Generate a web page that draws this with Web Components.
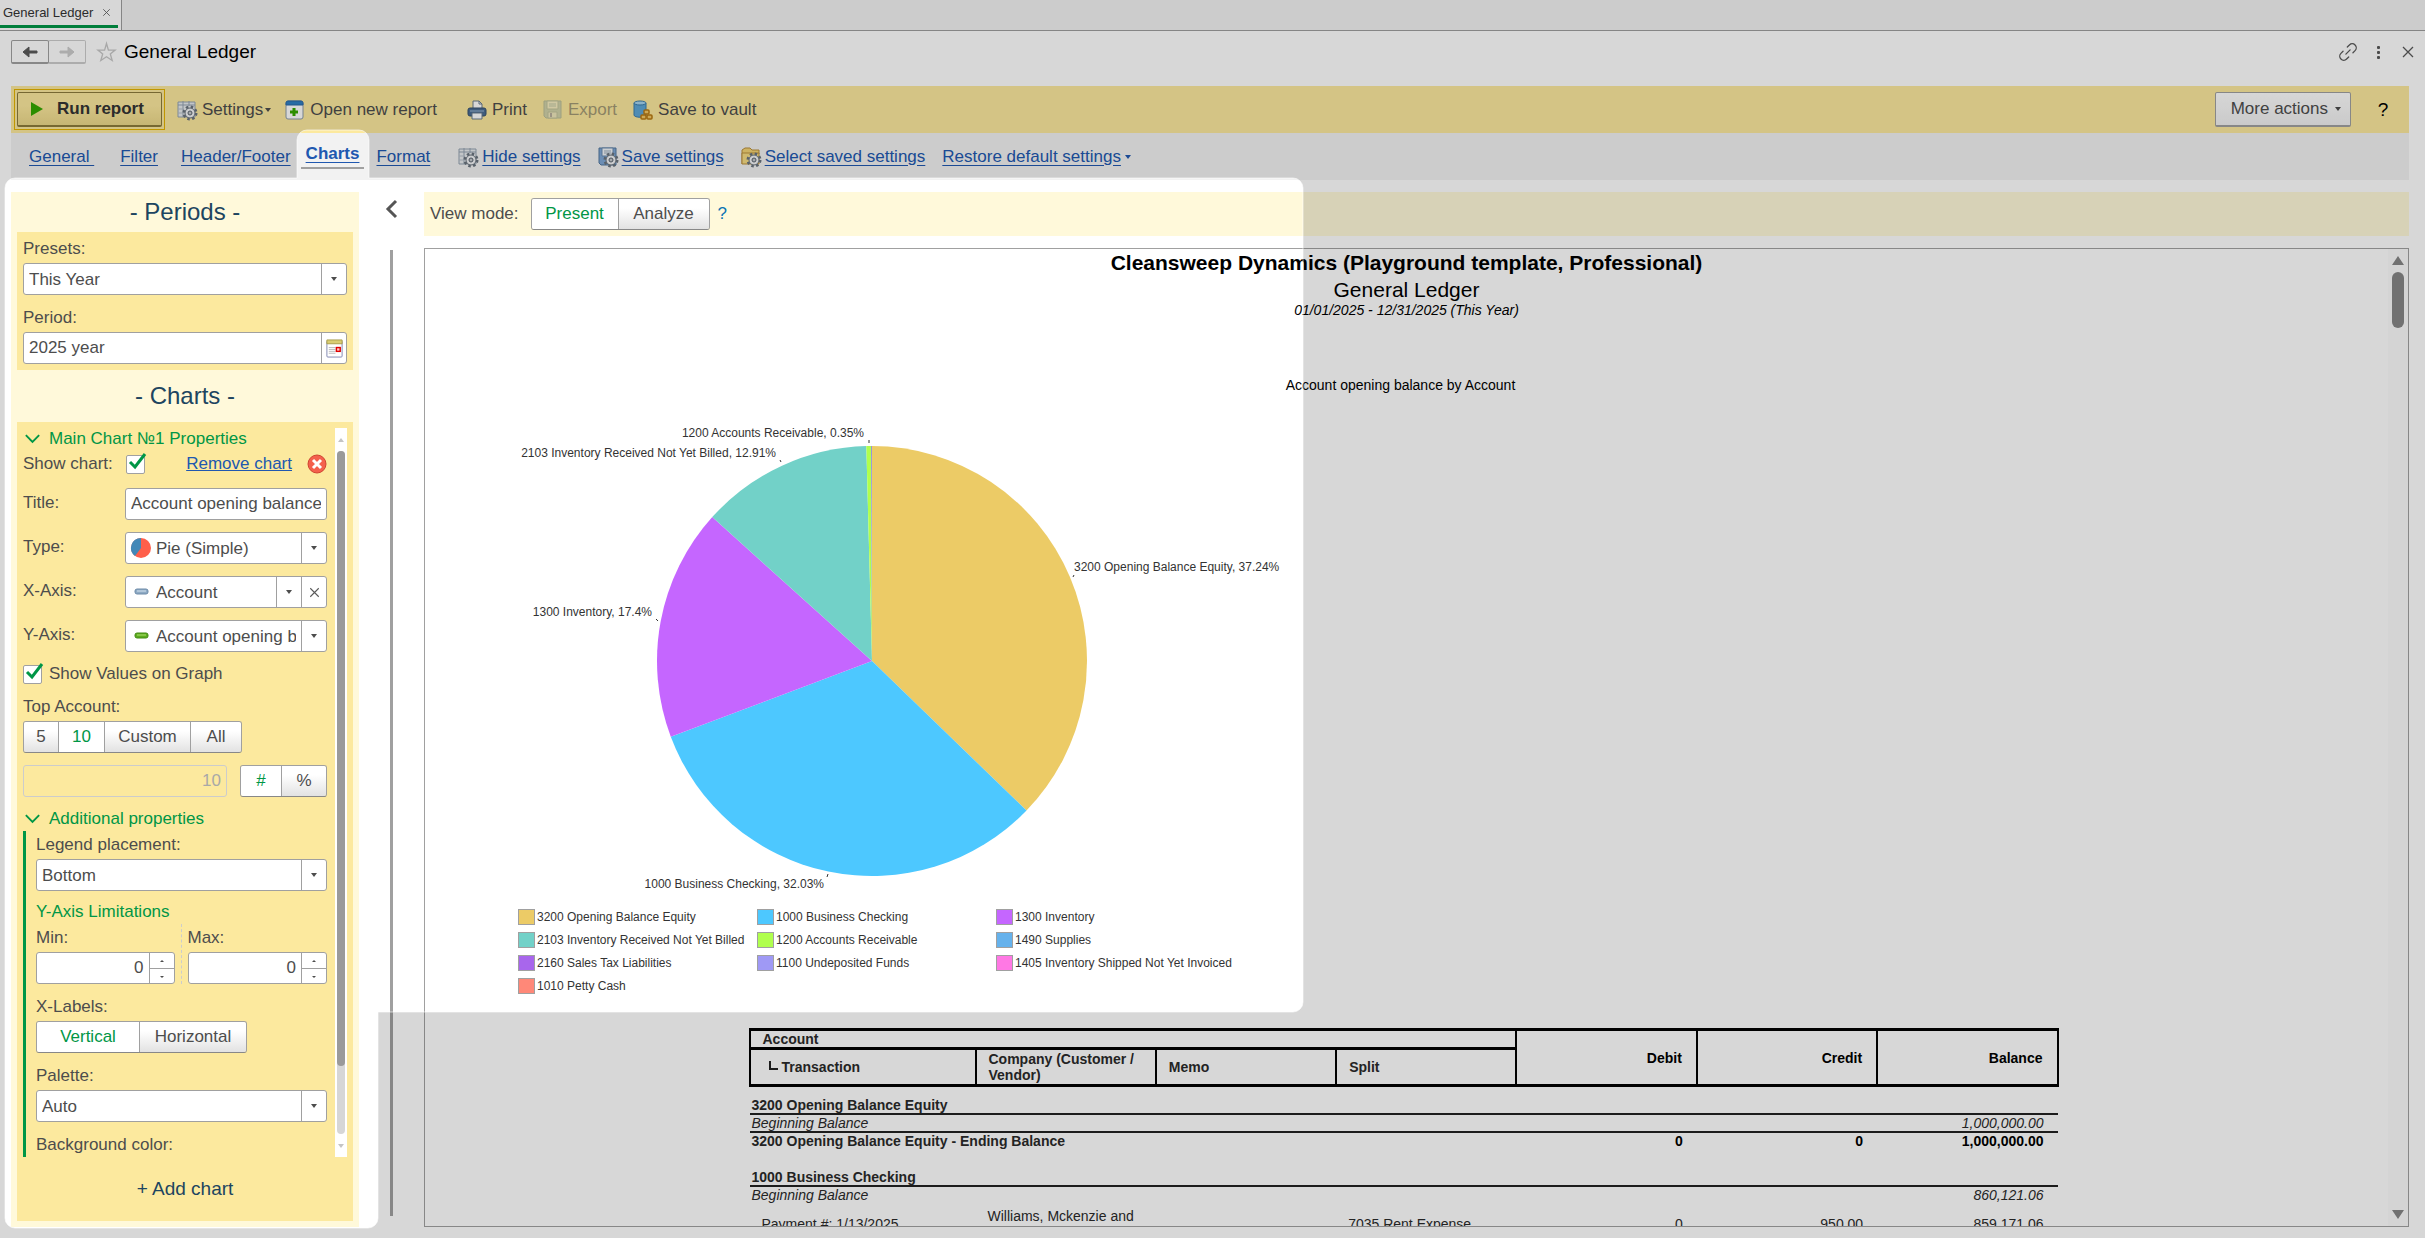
<!DOCTYPE html>
<html lang="en">
<head>
<meta charset="utf-8">
<title>General Ledger</title>
<style>
  html, body {
    margin: 0;
    height: 100%;
  }
  body {
    font-family: "Liberation Sans", Arial, sans-serif;
    font-size: 17px;
    color: #4d4d4d;
    background: #fff;
    overflow: hidden;
    --yellow: #fce99e;
    --pale: #fff9da;
    --line: #a0a0a0;
    --green: #009646;
    --link: #2058b0;
  }
</style>
</head>
<body>
<ledger-app></ledger-app>

<script>
const ICONS = {
  sheetgear: `<path d="M1 2h17v15H1z" fill="#e8ebee" stroke="#94a2b0"/><path d="M1 5h17M6 1v16M12 1v5" stroke="#94a2b0"/><path d="M1 9h5M1 13h5" stroke="#b4bec8"/>{gear}`,
  disc: `<path d="M1 1h17v17H3l-2-2z" fill="#7fa8d6" stroke="#55789f"/><path d="M4 1h11v8H4z" fill="#f2f6fa" stroke="#6c8cb0"/><path d="M6 4h7M6 6h7" stroke="#9ab"/>{gear}`,
  folder: `<path d="M1 17V3l3-2h5l2 2h7v4" fill="#f4d375" stroke="#b98f3c"/><path d="M1 6h17v11H1z" fill="#f6dc84" stroke="#b98f3c"/>{gear}`,
  newdoc: `<rect x="1" y="1" width="17" height="18" rx="2" fill="#fff" stroke="#8a9aaa"/><path d="M1 5V3q0-2 2-2h13q2 0 2 2v2z" fill="#2f7fc4" stroke="#2c6ba6"/><path d="M9 8v8M5 12h8" stroke="#35a800" stroke-width="3"/>`,
  print: `<path d="M6 9V1h6l3 3v5" fill="#fff" stroke="#6b7c8c"/><path d="M12 1v3h3" fill="none" stroke="#6b7c8c"/><rect x="1" y="8" width="18" height="8" rx="2" fill="#4a6d94" stroke="#35506e"/><path d="M3 11h14" stroke="#9db8d4"/><path d="M5 13h10v6H5z" fill="#fff" stroke="#6b7c8c"/>`,
  floppy: `<path d="M1 1h17v17H3l-2-2z" fill="#a8bcb4" stroke="#7c9494"/><path d="M4 1h11v8H4z" fill="#f4f4e4" stroke="#8aa09a"/><path d="M6 4h7M6 6h7" stroke="#8aa"/><path d="M5 12h9v6H5z" fill="#e4e8da" stroke="#8aa09a"/><path d="M7 13h2v4H7z" fill="#779"/>`,
  vault: `<path d="M1 3v12c0 3 12 3 12 0V3" fill="#5ea6d6" stroke="#3b7cab"/><ellipse cx="7" cy="3" rx="6" ry="2" fill="#a5d4ef" stroke="#3b7cab"/><g fill="#f4c964" stroke="#b87a12" stroke-width="1.500"><rect x="11" y="10" width="5" height="4" rx="1"/><rect x="8" y="15" width="5" height="4" rx="1"/><rect x="14" y="15" width="5" height="4" rx="1"/></g>`,
  link: `<g transform="rotate(-45 10 10)" fill="none" stroke="#5a5a5a" stroke-width="1.300" stroke-linecap="round"><path d="M7 6H4a4 4 0 0 0 0 8h3M13 6h3a4 4 0 0 1 0 8h-3M7 10h6"/></g>`,
  dots: `<g fill="#5a5a5a"><rect x="9" y="4" width="3" height="3" rx="1"/><rect x="9" y="9" width="3" height="3" rx="1"/><rect x="9" y="14" width="3" height="3" rx="1"/></g>`,
  cross: `<path d="M5 5l10 10M15 5L5 15" stroke="#5a5a5a" stroke-width="1.300"/>`,
  star: `<path d="M10 1l2 7h7l-5 4 2 7-6-4-6 4 2-7-5-4h7z" fill="none" stroke="#c8c8c8" stroke-width="1.400"/>`,
  left: `<path d="M3 10l6-5v4h8v2H9v4z" fill="#5a5a5a" stroke="#5a5a5a"/>`,
  right: `<path d="M17 10l-6-5v4H3v2h8v4z" fill="#ccc" stroke="#ccc"/>`,
  play: `<path d="M4 3l12 7-12 7z" fill="#35a800"/>`,
  fold: `<path d="M3 6l7 7 7-7" fill="none" stroke="#009646" stroke-width="2"/>`,
  collapse: `<path d="M14 2L6 10l8 8" fill="none" stroke="#555" stroke-width="3"/>`,
  remove: `<circle cx="10" cy="10" r="9" fill="#f4604c" stroke="#cf4330"/><path d="M6 6l8 8M14 6l-8 8" stroke="#fff" stroke-width="3"/>`,
  pie: `<circle cx="10" cy="10" r="10" fill="#ff5f4a"/><path d="M10 10V0A10 10 0 0 0 4 18z" fill="#4288b8"/>`,
  bluebar: `<rect x="4" y="7" width="13" height="5" rx="2" fill="#8eaac4" stroke="#6c8aa8"/><path d="M6 9h9" stroke="#d5e3ef"/>`,
  greenbar: `<rect x="4" y="7" width="13" height="5" rx="2" fill="#5cac1e" stroke="#438a12"/><path d="M6 9h9" stroke="#b0e070"/>`,
  calendar: `<rect x="2" y="2" width="16" height="17" rx="1" fill="#fff" stroke="#8086b0"/><path d="M2 1h16v4H2z" fill="#d9cd73" stroke="#a89c4a"/><path d="M4 9h7M4 11h7M4 13h7M4 15h7" stroke="#bbb"/><rect x="12" y="9" width="4" height="4" fill="#fcc" stroke="#e00000" stroke-width="1.500"/>`
};
const GEAR = `<circle cx="13" cy="13" r="6" fill="none" stroke="#6a747e" stroke-width="3" stroke-dasharray="2.400 2.310"/><circle cx="13" cy="13" r="5" fill="#f2f4f6" stroke="#6a747e"/><circle cx="13" cy="13" r="2" fill="#c4c8cc" stroke="#59636e"/>`;

// Base class: fills an open shadow root with the string from render()
class BaseElement extends HTMLElement {
  connectedCallback() {
    if (this.shadowRoot) {
      return;
    }
    this.attachShadow({ mode: 'open' });
    this.shadowRoot.innerHTML = this.render();
  }

  attr(name, fallback = '') {
    return this.hasAttribute(name) ? this.getAttribute(name) : fallback;
  }
}

class UiIcon extends BaseElement {
  render() {
    return `
      <style>
        :host { display: inline-flex; flex: none; width: 20px; height: 20px; }
        svg { width: 100%; height: 100%; overflow: visible; }
      </style>
      <svg viewBox="0 0 20 20" aria-hidden="true">${ICONS[this.attr('name')].replace('{gear}', GEAR)}</svg>`;
  }
}
customElements.define('ui-icon', UiIcon);

class UiCaret extends BaseElement {
  render() {
    return `
      <style>
        :host { display: inline-block; flex: none; border: 3px solid transparent; border-top: 4px solid currentColor; border-bottom: 0; }
        :host([up]) { border-bottom: 4px solid currentColor; border-top: 0; }
      </style>`;
  }
}
customElements.define('ui-caret', UiCaret);

class ToolButton extends BaseElement {
  render() {
    return `
      <style>
        :host { display: flex; }
        button {
          display: flex;
          align-items: center;
          gap: 5px;
          padding: 0;
          border: 0;
          background: none;
          font: inherit;
          color: inherit;
          white-space: nowrap;
        }
        button:disabled { opacity: .5; }
        ui-caret { margin-left: -3px; }
      </style>
      <button ${this.hasAttribute('off') ? 'disabled' : ''}>
        <ui-icon name="${this.attr('icon')}"></ui-icon><slot></slot>
        ${this.hasAttribute('menu') ? '<ui-caret></ui-caret>' : ''}
      </button>`;
  }
}
customElements.define('tool-button', ToolButton);

class NavLink extends BaseElement {
  render() {
    const icon = this.attr('icon');
    return `
      <style>
        :host { display: flex; align-items: center; gap: 4px; color: var(--link); }
        a { color: inherit; text-underline-offset: 3px; white-space: pre; }
        :host([current]) {
          font-weight: bold;
          padding: 0 5px 3px;
          border-bottom: 2px solid var(--line);
        }
      </style>
      ${icon ? `<ui-icon name="${icon}"></ui-icon>` : ''}<a href="#"><slot></slot></a>
      ${this.hasAttribute('menu') ? '<ui-caret></ui-caret>' : ''}`;
  }
}
customElements.define('nav-link', NavLink);

class SegGroup extends BaseElement {
  render() {
    const active = this.attr('active');
    const buttons = this.attr('options').split('|').map(text =>
      `<button aria-pressed="${text === active}">${text}</button>`).join('');
    return `
      <style>
        :host { display: block; }
        div {
          display: inline-grid;
          vertical-align: top;
          grid-template-columns: ${this.attr('cols')};
          height: 32px;
          box-sizing: border-box;
          border: 1px solid var(--line);
          border-bottom-color: #888;
          border-radius: 3px;
          overflow: hidden;
        }
        button {
          padding: 0;
          border: 0;
          border-left: 1px solid var(--line);
          background: linear-gradient(#fff 30%, #e2e2e2);
          font: inherit;
          color: inherit;
        }
        button:first-child { border-left: 0; }
        button[aria-pressed=true] { background: #fff; color: var(--green); }
      </style>
      <div role="group" aria-label="${this.attr('label')}">${buttons}</div>`;
  }
}
customElements.define('seg-group', SegGroup);

// Labelled field. kind: select, text, date, spin. "inline" puts the label on the left
class FormField extends BaseElement {
  control() {
    const value = this.attr('value');
    const name = this.attr('label') ? '' : `aria-label="${this.attr('name')}"`;
    if (this.attr('kind') === 'select') {
      return `<select id="c" ${name}><option>${value}</option></select>`;
    }
    return `<input id="c" type="text" ${name} value="${value}" ${this.hasAttribute('off') ? 'disabled' : ''}>`;
  }

  buttons() {
    const kind = this.attr('kind');
    let html = '';
    if (kind === 'select') {
      html += '<span class="end"><ui-caret></ui-caret></span>';
    }
    if (kind === 'date') {
      html += '<button class="end" aria-label="Choose period"><ui-icon name="calendar"></ui-icon></button>';
    }
    if (kind === 'spin') {
      html += '<span class="end spin"><button aria-label="Up"><ui-caret up></ui-caret></button><button aria-label="Down"><ui-caret></ui-caret></button></span>';
    }
    if (this.hasAttribute('clear')) {
      html += '<button class="end" aria-label="Clear"><ui-icon name="cross"></ui-icon></button>';
    }
    return html;
  }

  render() {
    const icon = this.attr('icon');
    const label = this.attr('label');
    return `
      <style>
        :host { display: block; min-width: 0; }
        :host([inline]) { display: grid; grid-template-columns: 102px minmax(0, 1fr); }
        label { display: block; line-height: 28px; }
        :host([inline]) label { line-height: 30px; }
        .box {
          display: flex;
          align-items: center;
          height: 32px;
          box-sizing: border-box;
          border: 1px solid var(--line);
          border-radius: 3px;
          background: #fff;
          overflow: hidden;
        }
        .box > ui-icon { margin-left: 5px; }
        input, select {
          flex: 1;
          min-width: 0;
          height: 100%;
          padding: 0;
          margin: 0 5px;
          border: 0;
          border-radius: 0;
          outline: 0;
          appearance: none;
          background: none;
          font: inherit;
          color: inherit;
          overflow: hidden;
          text-overflow: clip;
        }
        :host([kind=spin]) input, :host([off]) input { text-align: right; }
        :host([off]) .box { background: none; border-color: #ccc; }
        :host([off]) input { color: #a8a8a8; }
        .end {
          display: flex;
          align-items: center;
          justify-content: center;
          flex: none;
          width: 25px;
          height: 100%;
          padding: 0;
          border: 0;
          border-left: 1px solid var(--line);
          background: none;
          box-sizing: border-box;
        }
        .end ui-icon { width: 19px; height: 19px; }
        .end ui-icon[name=cross] { width: 17px; height: 17px; }
        .spin { flex-direction: column; align-items: stretch; }
        .spin button { flex: 1; padding: 0; border: 0; background: none; color: inherit; line-height: 0; }
        .spin ui-caret { border-width: 2px; }
        .spin button + button { border-top: 1px solid var(--line); }
      </style>
      ${label ? `<label for="c">${label}</label>` : ''}
      <div class="box">
        ${icon ? `<ui-icon name="${icon}"></ui-icon>` : ''}
        ${this.control()}${this.buttons()}
      </div>`;
  }
}
customElements.define('form-field', FormField);

class CheckField extends BaseElement {
  render() {
    return `
      <style>
        :host { display: flex; }
        label { display: flex; align-items: center; gap: 7px; }
        :host([before]) label { flex-direction: row-reverse; gap: 13px; }
        span { position: relative; display: flex; }
        input {
          appearance: none;
          width: 19px;
          height: 19px;
          margin: 0;
          border: 1px solid var(--line);
          border-radius: 2px;
          background: #fff;
        }
        svg { position: absolute; left: 0; top: -3px; width: 22px; height: 20px; pointer-events: none; }
      </style>
      <label>
        <span><input type="checkbox" checked><svg viewBox="0 0 22 20"><path d="M4 10l5 5L19 2" fill="none" stroke="#009646" stroke-width="3"/></svg></span>
        <slot></slot>
      </label>`;
  }
}
customElements.define('check-field', CheckField);

class SideScroll extends BaseElement {
  render() {
    return `
      <style>
        :host { display: flex; flex-direction: column; flex: none; width: 12px; color: #c4c4c4; background: #fff; }
        .arrow { display: flex; align-items: center; justify-content: center; height: 23px; }
        .track { flex: 1; margin: 0 2px; border-radius: 4px; background: #d6d6d6; }
        .thumb { height: 90%; border-radius: 4px; background: #9a9a9a; }
        :host([wide]) { width: 20px; background: #fcfcfc; color: #868686; }
        :host([wide]) .track { background: none; margin: 0 4px; }
        :host([wide]) .thumb { height: 6%; border-radius: 6px; background: #868686; }
        :host([wide]) ui-caret { border-left-width: 6px; border-right-width: 6px; }
        :host([wide]) ui-caret[up] { border-bottom-width: 9px; }
        :host([wide]) ui-caret:not([up]) { border-top-width: 9px; }
      </style>
      <div class="arrow"><ui-caret up></ui-caret></div>
      <div class="track"><div class="thumb"></div></div>
      <div class="arrow"><ui-caret></ui-caret></div>`;
  }
}
customElements.define('side-scroll', SideScroll);

class SettingsPanel extends BaseElement {
  render() {
    return `
      <style>
        :host {
          display: flex;
          flex-direction: column;
          flex: none;
          width: 348px;
          box-sizing: border-box;
          padding: 0 6px 6px;
          background: var(--pale);
        }
        h2 { margin: 0; font-size: 24px; font-weight: normal; text-align: center; line-height: 40px; color: #1d4560; }
        h2 + .periods + h2 { line-height: 52px; }
        .periods { display: grid; gap: 9px; padding: 3px 6px 6px; background: var(--yellow); }
        .charts { display: flex; flex-direction: column; flex: 1; min-height: 0; padding: 6px 6px 0; background: var(--yellow); }
        .scroll { display: flex; gap: 8px; flex: 1; min-height: 0; }
        .list { flex: 1; min-width: 0; overflow: hidden; }
        h3 { display: flex; align-items: center; gap: 7px; margin: 0; font-size: 17px; font-weight: normal; line-height: 22px; color: var(--green); }
        h3 ui-icon { width: 19px; }
        .show { display: flex; align-items: center; height: 28px; }
        .show a { margin-left: auto; margin-right: 15px; color: var(--link); }
        .rows { display: grid; gap: 12px; margin-top: 10px; }
        .values { margin: 8px 0 5px; height: 28px; }
        .caption { line-height: 28px; }
        .limit { display: grid; grid-template-columns: minmax(0, 1fr) 87px; gap: 13px; margin: 12px 0 10px; }
        .more { padding-left: 10px; border-left: 3px solid var(--green); display: grid; gap: 9px; }
        .list h3.sub, .more h3 { line-height: 24px; }
        .pair { display: grid; grid-template-columns: 1fr 1fr; margin-top: -9px; }
        .pair form-field:first-child { padding-right: 6px; border-right: 1px dashed #ccc; }
        .pair form-field:last-child { padding-left: 6px; }
        .last { height: 28px; }
        .add { height: 64px; padding: 0; border: 0; background: none; font: inherit; font-size: 19px; color: #1d4560; }
      </style>
      <h2>- Periods -</h2>
      <div class="periods">
        <form-field kind="select" label="Presets:" value="This Year"></form-field>
        <form-field kind="date" label="Period:" value="2025 year"></form-field>
      </div>
      <h2>- Charts -</h2>
      <div class="charts">
        <div class="scroll">
          <div class="list">
            <h3><ui-icon name="fold"></ui-icon>Main Chart №1 Properties</h3>
            <div class="show">
              <check-field before>Show chart:</check-field>
              <a href="#">Remove chart</a>
              <ui-icon name="remove"></ui-icon>
            </div>
            <div class="rows">
              <form-field inline kind="text" label="Title:" value="Account opening balance by Account"></form-field>
              <form-field inline kind="select" label="Type:" icon="pie" value="Pie (Simple)"></form-field>
              <form-field inline kind="select" clear label="X-Axis:" icon="bluebar" value="Account"></form-field>
              <form-field inline kind="select" label="Y-Axis:" icon="greenbar" value="Account opening balance"></form-field>
            </div>
            <check-field class="values">Show Values on Graph</check-field>
            <div class="caption">Top Account:</div>
            <seg-group label="Top Account" options="5|10|Custom|All" active="10" cols="34px 46px 86px 51px"></seg-group>
            <div class="limit">
              <form-field kind="text" name="Top count" off value="10"></form-field>
              <seg-group label="Unit" options="#|%" active="#" cols="40px 45px"></seg-group>
            </div>
            <h3 class="sub"><ui-icon name="fold"></ui-icon>Additional properties</h3>
            <div class="more">
              <form-field kind="select" label="Legend placement:" value="Bottom"></form-field>
              <h3>Y-Axis Limitations</h3>
              <div class="pair">
                <form-field kind="spin" label="Min:" value="0"></form-field>
                <form-field kind="spin" label="Max:" value="0"></form-field>
              </div>
              <div>
                <div class="caption">X-Labels:</div>
                <seg-group label="X-Labels" options="Vertical|Horizontal" active="Vertical" cols="102px 107px"></seg-group>
              </div>
              <form-field kind="select" label="Palette:" value="Auto"></form-field>
              <div class="caption last">Background color:</div>
            </div>
          </div>
          <side-scroll></side-scroll>
        </div>
        <button class="add">+ Add chart</button>
      </div>`;
  }
}
customElements.define('settings-panel', SettingsPanel);

class PieChart extends BaseElement {
  slices() {
    const data = [
      [37.24, '#eccb66'], [32.03, '#4dc8ff'], [17.4, '#c566ff'],
      [12.91, '#72d1c8'], [0.35, '#b0ff4d'], [0.07, '#8f8fd8']
    ];
    const cx = 367, cy = 266, r = 215;
    let sum = 0;
    const point = share => {
      const angle = share / 100 * Math.PI * 2;
      return `${cx + r * Math.sin(angle)} ${cy - r * Math.cos(angle)}`;
    };
    return data.map(([share, color]) => {
      const from = point(sum);
      sum += share;
      return `<path d="M${cx} ${cy}L${from}A${r} ${r} 0 0 1 ${point(sum)}z" fill="${color}"/>`;
    }).join('');
  }

  render() {
    const legend = [
      ['3200 Opening Balance Equity', '#eccb66'], ['1000 Business Checking', '#4dc8ff'], ['1300 Inventory', '#c566ff'],
      ['2103 Inventory Received Not Yet Billed', '#72d1c8'], ['1200 Accounts Receivable', '#b0ff4d'], ['1490 Supplies', '#66b2ec'],
      ['2160 Sales Tax Liabilities', '#a866ec'], ['1100 Undeposited Funds', '#9f99f5'], ['1405 Inventory Shipped Not Yet Invoiced', '#ff78e4'],
      ['1010 Petty Cash', '#ff8878']
    ].map(([text, color]) => `<li><i style="background: ${color}"></i>${text}</li>`).join('');
    return `
      <style>
        :host { display: block; font-size: 12px; color: #333; }
        h4 { margin: 0; padding-right: 12px; font-size: 14px; font-weight: normal; line-height: 20px; text-align: center; color: #000; }
        svg { display: block; width: 800px; height: 505px; margin-left: 80px; }
        text { fill: #333; }
        ul { display: grid; grid-template-columns: repeat(3, 239px); margin: 5px 0 0 93px; padding: 0; list-style: none; }
        li { display: flex; align-items: center; gap: 2px; height: 23px; white-space: nowrap; }
        i { width: 15px; height: 14px; border: 1px solid #a0a0a0; }
      </style>
      <h4>Account opening balance by Account</h4>
      <svg viewBox="0 0 800 505" role="img" aria-label="Account opening balance by Account">
        ${this.slices()}
        <text x="569" y="176">3200 Opening Balance Equity, 37.24%</text>
        <text x="359" y="42" text-anchor="end">1200 Accounts Receivable, 0.35%</text>
        <text x="271" y="62" text-anchor="end">2103 Inventory Received Not Yet Billed, 12.91%</text>
        <text x="147" y="221" text-anchor="end">1300 Inventory, 17.4%</text>
        <text x="319" y="493" text-anchor="end">1000 Business Checking, 32.03%</text>
        <path d="M364 45v3M275 65l1 2M569 180l-1 2M151 224l2 2M323 479l-1 3" stroke="#333" fill="none"/>
      </svg>
      <ul>${legend}</ul>`;
  }
}
customElements.define('pie-chart', PieChart);

class LedgerTable extends BaseElement {
  render() {
    return `
      <style>
        :host { display: block; padding: 31px 6px 0 0; font-size: 14px; color: #2a2a2a; }
        table { width: 1310px; margin: 0 auto; border-collapse: collapse; table-layout: fixed; }
        th, td { height: 16px; padding: 0 14px 0 2px; line-height: 16px; text-align: left; }
        thead th { border: 3px solid #000; border-left-width: 2px; border-right-width: 2px; padding-left: 12px; }
        thead .sub th { height: 34px; padding-left: 12px; padding-right: 0; }
        .num, thead .num { text-align: right; color: #000; }
        .gap td { height: 10px; padding: 0; line-height: 10px; }
        .blank td { height: 20px; }
        .line > * { border-bottom: 2px solid #222; }
        .start td { font-style: italic; }
        .start .num, .entry .num { color: #2a2a2a; }
        .entry td { padding-top: 5px; }
        .entry td:first-child, .entry td:nth-child(2), .entry td:nth-child(4) { padding-left: 12px; }
        svg { width: 9px; height: 9px; margin: 0 4px 2px 6px; }
      </style>
      <table>
        <colgroup><col style="width: 226px"><col><col><col><col><col><col></colgroup>
        <thead>
          <tr>
            <th colspan="4">Account</th>
            <th class="num" rowspan="2">Debit</th>
            <th class="num" rowspan="2">Credit</th>
            <th class="num" rowspan="2">Balance</th>
          </tr>
          <tr class="sub">
            <th><svg viewBox="0 0 9 9" aria-hidden="true"><path d="M1 0v8h8" fill="none" stroke="#222" stroke-width="2"/></svg>Transaction</th>
            <th>Company (Customer / Vendor)</th>
            <th>Memo</th>
            <th>Split</th>
          </tr>
        </thead>
        <tbody>
          <tr class="gap"><td colspan="7"></td></tr>
          <tr class="line"><th colspan="7">3200 Opening Balance Equity</th></tr>
          <tr class="start line"><td colspan="6">Beginning Balance</td><td class="num">1,000,000.00</td></tr>
          <tr>
            <th colspan="4">3200 Opening Balance Equity - Ending Balance</th>
            <th class="num">0</th><th class="num">0</th><th class="num">1,000,000.00</th>
          </tr>
          <tr class="blank"><td colspan="7"></td></tr>
          <tr class="line"><th colspan="7">1000 Business Checking</th></tr>
          <tr class="start"><td colspan="6">Beginning Balance</td><td class="num">860,121.06</td></tr>
          <tr class="entry">
            <td>Payment #: 1/13/2025</td>
            <td>Williams, Mckenzie and<br>&nbsp;</td>
            <td></td>
            <td>7035 Rent Expense</td>
            <td class="num">0</td><td class="num">950.00</td><td class="num">859,171.06</td>
          </tr>
        </tbody>
      </table>`;
  }
}
customElements.define('ledger-table', LedgerTable);

class ReportView extends BaseElement {
  render() {
    return `
      <style>
        :host { display: flex; flex-direction: column; flex: 1; min-width: 0; gap: 12px; }
        .mode { display: flex; align-items: center; height: 44px; padding-left: 6px; background: var(--pale); }
        .mode seg-group { margin: 0 8px 0 12px; }
        .mode button { padding: 0; border: 0; background: none; font: inherit; color: #0a74b4; }
        .page { display: flex; flex: 1; min-height: 0; border: 1px solid var(--line); }
        .doc { flex: 1; min-width: 0; overflow: hidden; color: #000; }
        header { text-align: center; margin-bottom: 57px; }
        h1, h2, p { margin: 0; font-size: 21px; line-height: 27px; }
        h2 { font-weight: normal; }
        p { font-size: 14px; line-height: 15px; font-style: italic; }
      </style>
      <div class="mode">
        View mode:
        <seg-group label="View mode" options="Present|Analyze" active="Present" cols="86px 91px"></seg-group>
        <button>?</button>
      </div>
      <div class="page">
        <div class="doc">
          <header>
            <h1>Cleansweep Dynamics (Playground template, Professional)</h1>
            <h2>General Ledger</h2>
            <p>01/01/2025 - 12/31/2025 (This Year)</p>
          </header>
          <pie-chart></pie-chart>
          <ledger-table></ledger-table>
        </div>
        <side-scroll wide></side-scroll>
      </div>`;
  }
}
customElements.define('report-view', ReportView);

// Dims the page, leaving the charts tab, its settings and the chart lit
class SpotLight extends BaseElement {
  render() {
    const hole = 'M15 178H297V140a10 10 0 0 1 10-10H359a10 10 0 0 1 10 10V178H1293a10 10 0 0 1 10 10V1002a10 10 0 0 1-10 10H378V1218a10 10 0 0 1-10 10H15a10 10 0 0 1-10-10V188a10 10 0 0 1 10-10z';
    return `
      <style>
        :host { position: absolute; inset: 0; overflow: hidden; pointer-events: none; }
        svg { display: block; width: 100%; height: 100%; }
      </style>
      <svg aria-hidden="true">
        <path d="M0 0H9999V9999H0z${hole}" fill="#000" fill-opacity=".157" fill-rule="evenodd"/>
        <path d="${hole}" fill="none" stroke="#fff" stroke-opacity=".6"/>
      </svg>`;
  }
}
customElements.define('spot-light', SpotLight);

class LedgerApp extends BaseElement {
  render() {
    return `
      <style>
        :host { position: relative; display: flex; flex-direction: column; height: 100vh; }
        button { font: inherit; color: inherit; }
        .tabs { display: flex; height: 30px; background: #f2f2f2; border-bottom: 1px solid #9e9e9e; }
        .tab { padding-right: 3px; border-right: 1px solid #9e9e9e; background: #fff; font-size: 13px; color: #333; }
        .tab div { display: flex; align-items: center; gap: 7px; height: 25px; padding: 0 5px 0 3px; border-bottom: 3px solid var(--green); }
        .tab button { display: flex; padding: 0; border: 0; background: none; }
        .tab ui-icon { width: 13px; height: 13px; }
        .title { display: flex; align-items: center; height: 42px; padding: 0 7px 13px 11px; }
        .title h1 { flex: 1; margin: 0; font-size: 19px; font-weight: normal; color: #000; }
        .nav { display: flex; margin-right: 11px; }
        .nav button { display: flex; align-items: center; justify-content: center; width: 38px; height: 24px; padding: 0; border: 1px solid var(--line); border-bottom: 2px solid var(--line); border-radius: 2px; background: #fff; }
        .nav button + button { margin-left: -1px; border-color: #ccc; border-left-color: var(--line); }
        .title > ui-icon { width: 19px; margin-right: 8px; }
        .acts { display: flex; gap: 10px; }
        .acts button { display: flex; padding: 0; border: 0; background: none; }
        .toolbar { display: flex; align-items: center; height: 47px; margin: 0 16px 0 11px; padding-left: 3px; background: var(--yellow); }
        .run { border: 1px solid #e4b200; padding: 2px; margin-right: 12px; }
        .run button { display: flex; align-items: center; gap: 10px; height: 35px; padding: 0 17px 0 9px; border: 1px solid #8c7c3c; border-bottom: 2px solid #8c7c3c; border-radius: 2px; background: linear-gradient(var(--yellow) 40%, #ecd88a); font-weight: bold; color: #333; }
        .tools { display: flex; flex: 1; }
        .tools > :nth-child(1) { margin-right: 14px; }
        .tools > :nth-child(2) { margin-right: 30px; }
        .tools > :nth-child(n+3) { margin-right: 16px; }
        .moreacts { display: flex; align-items: center; gap: 7px; height: 35px; padding: 0 9px 0 15px; border: 1px solid var(--line); border-bottom: 2px solid var(--line); border-radius: 2px; background: linear-gradient(#fff, #f0f0f0); }
        .help { width: 52px; margin-left: 6px; padding: 0; border: 0; background: none; color: #000; font-size: 19px; }
        .links { display: flex; align-items: center; height: 47px; margin: 0 16px 0 11px; padding-left: 18px; background: #f2f2f2; }
        nav-link { margin-right: 17px; }
        .links > :nth-child(1) { margin-right: 26px; }
        .links > :nth-child(2) { margin-right: 23px; }
        .links > :nth-child(3) { margin-right: 10px; }
        .links > :nth-child(4) { margin-right: 12px; }
        .links > :nth-child(5) { margin-right: 28px; }
        main { display: flex; flex: 1; min-height: 0; padding: 12px 16px 11px 11px; }
        .split { display: flex; flex-direction: column; align-items: center; flex: none; width: 65px; }
        .split button { display: flex; margin-top: 7px; padding: 0; border: 0; background: none; }
        .split hr { flex: 1; width: 3px; margin: 31px 0 11px; border: 0; background: var(--line); }
      </style>
      <div class="tabs">
        <div class="tab"><div>General Ledger<button aria-label="Close tab"><ui-icon name="cross"></ui-icon></button></div></div>
      </div>
      <div class="title">
        <div class="nav">
          <button aria-label="Back"><ui-icon name="left"></ui-icon></button>
          <button aria-label="Forward"><ui-icon name="right"></ui-icon></button>
        </div>
        <ui-icon name="star"></ui-icon>
        <h1>General Ledger</h1>
        <div class="acts">
          <button aria-label="Get link"><ui-icon name="link"></ui-icon></button>
          <button aria-label="Menu"><ui-icon name="dots"></ui-icon></button>
          <button aria-label="Close"><ui-icon name="cross"></ui-icon></button>
        </div>
      </div>
      <div class="toolbar">
        <div class="run"><button><ui-icon name="play"></ui-icon>Run report</button></div>
        <div class="tools">
          <tool-button icon="sheetgear" menu>Settings</tool-button>
          <tool-button icon="newdoc">Open new report</tool-button>
          <tool-button icon="print">Print</tool-button>
          <tool-button icon="floppy" off>Export</tool-button>
          <tool-button icon="vault">Save to vault</tool-button>
        </div>
        <button class="moreacts">More actions <ui-caret></ui-caret></button>
        <button class="help">?</button>
      </div>
      <nav class="links">
        <nav-link>General </nav-link>
        <nav-link>Filter</nav-link>
        <nav-link>Header/Footer</nav-link>
        <nav-link current>Charts</nav-link>
        <nav-link>Format</nav-link>
        <nav-link icon="sheetgear">Hide settings</nav-link>
        <nav-link icon="disc">Save settings</nav-link>
        <nav-link icon="folder">Select saved settings</nav-link>
        <nav-link menu>Restore default settings</nav-link>
      </nav>
      <main>
        <settings-panel></settings-panel>
        <div class="split">
          <button aria-label="Hide settings"><ui-icon name="collapse"></ui-icon></button>
          <hr>
        </div>
        <report-view></report-view>
      </main>
      <spot-light></spot-light>`;
  }
}
customElements.define('ledger-app', LedgerApp);
</script>
</body>
</html>
